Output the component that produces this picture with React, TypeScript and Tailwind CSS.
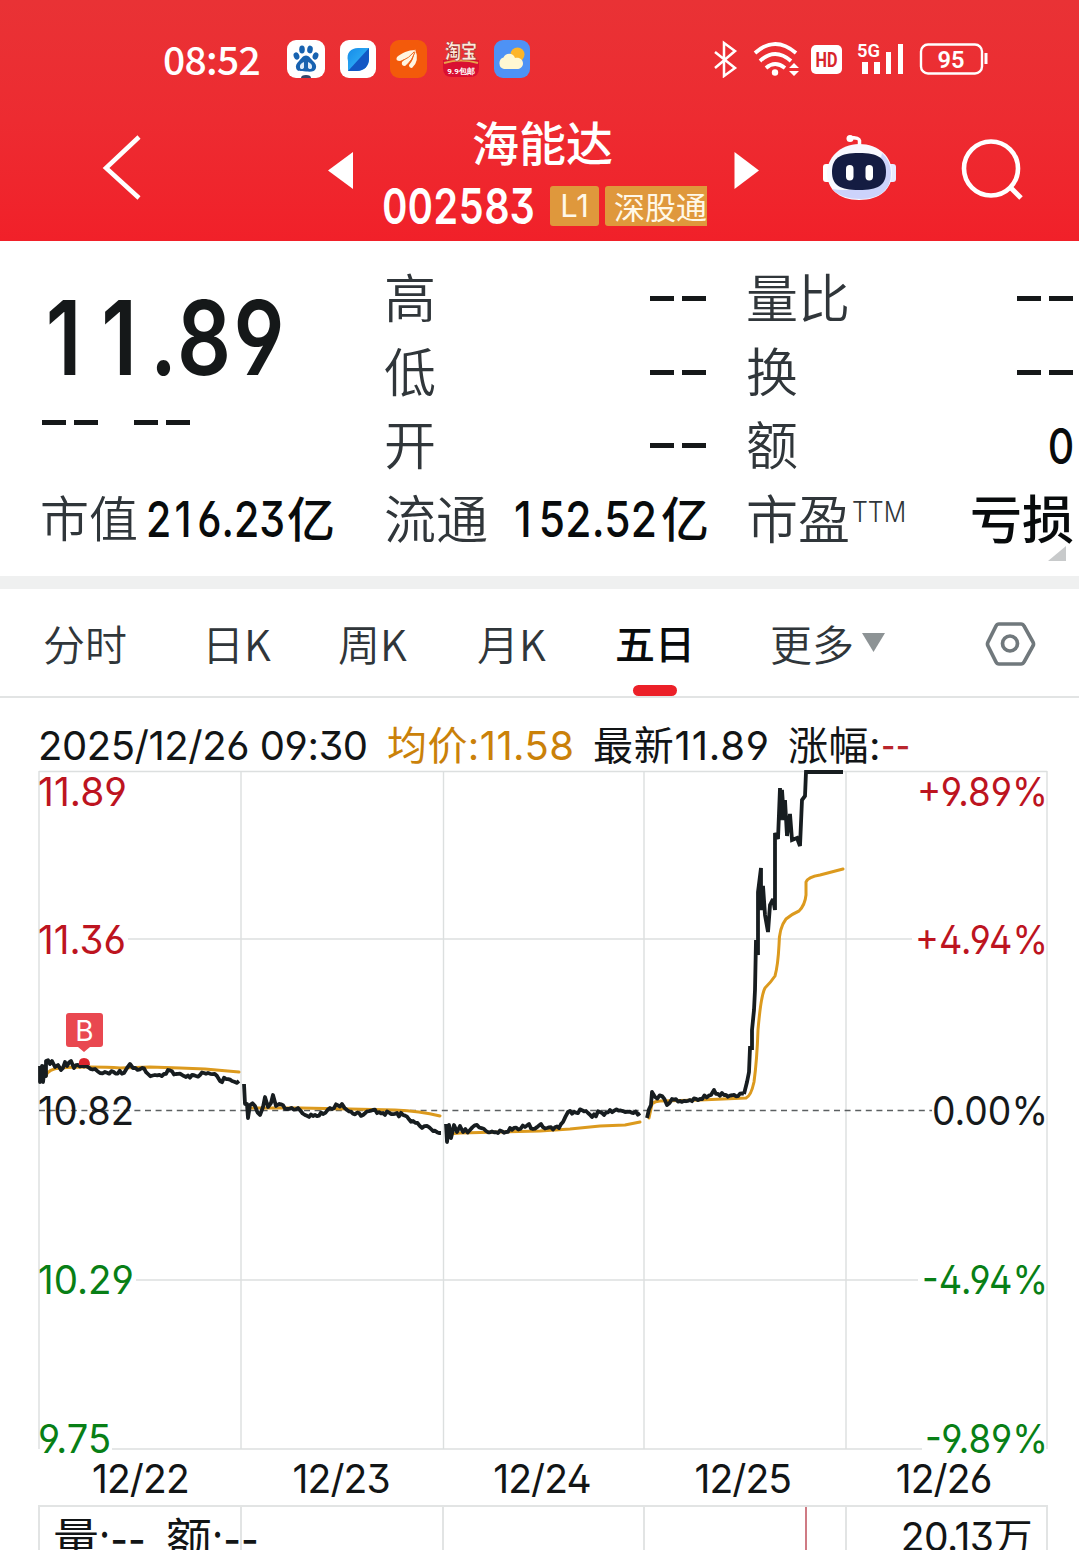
import React from "react";

type Point = [number, number];

/* ---------- Chart data ---------- */

const priceDays: Point[][] = [
  [[40,1066],[40,1082],[42,1066],[43,1082],[45,1066],[46,1076],[46,1061],[50,1064],[52,1061],[55,1067],[58,1065],[61,1070],[65,1062],[67,1066],[71,1061],[74,1068],[78,1065],[82,1066],[88,1067],[95,1069],[100,1073],[105,1072],[124,1073],[127,1068],[130,1064],[133,1068],[142,1068],[148,1074],[155,1075],[164,1074],[168,1070],[176,1074],[186,1077],[192,1075],[200,1075],[208,1073],[217,1076],[220,1081],[226,1079],[232,1081],[239,1081]],
  [[244,1084],[245,1104],[247,1104],[248,1118],[250,1105],[255,1106],[260,1115],[263,1107],[265,1097],[268,1107],[271,1103],[273,1095],[276,1106],[279,1104],[287,1109],[298,1108],[305,1115],[313,1116],[323,1114],[330,1108],[342,1104],[347,1110],[363,1115],[373,1110],[383,1113],[403,1115],[413,1121],[422,1128],[427,1126],[433,1131],[441,1133]],
  [[446,1124],[447,1142],[449,1125],[451,1138],[454,1125],[457,1132],[460,1126],[463,1132],[470,1130],[477,1125],[486,1131],[506,1132],[514,1128],[525,1127],[529,1124],[533,1129],[541,1124],[547,1128],[559,1128],[563,1122],[568,1112],[586,1111],[592,1117],[600,1112],[604,1115],[610,1110],[625,1112],[640,1113]],
  [[647,1118],[651,1105],[652,1092],[655,1097],[662,1096],[667,1105],[672,1099],[680,1101],[690,1100],[700,1099],[711,1095],[714,1090],[718,1094],[724,1095],[744,1094]],
];

const surge: Point[] = [[744,1094],[747,1082],[749,1072],[750,1048],[752,1048],[752,1030],[754,1010],[755,990],[756,940],[758,955],[758,892],[761,868],[761,910],[763,886],[765,915],[768,932],[770,905],[773,899],[775,910],[775,833],[778,839],[780,788],[780,820],[782,790],[784,820],[785,800],[787,836],[790,814],[792,840],[797,838],[800,846],[802,800],[805,796],[806,772],[843,772]];

const averageDays: string[] = [
  "M46 1076 Q48 1069 60 1068 T90 1067 T120 1068 L150 1067 L180 1068 L205 1069 L239 1072",
  "M250 1108 L300 1108 L350 1109 L395 1110 Q420 1111 440 1116",
  "M449 1134 L460 1133 L500 1132 L540 1131 L570 1129 L600 1126 L625 1125 L640 1122",
  "M649 1118 L652 1104 Q655 1101 660 1101 L700 1100 L746 1098 Q751 1096 754 1082 Q757 1060 758 1030 Q761 995 765 988 Q771 982 775 976 Q778 965 779 945 Q779 928 786 919 Q792 914 799 911 Q805 905 806 895 L806 882 Q808 877 820 875 L843 869",
];

function roughen(points: Point[]): string {
  let seed = 7;
  const out: string[] = [];
  points.forEach((p, i) => {
    const next = points[i + 1];
    out.push(`${p[0]},${p[1]}`);
    if (!next) return;
    const steps = Math.floor((next[0] - p[0]) / 2);
    for (let s = 1; s < steps; s++) {
      seed = (seed * 16807) % 2147483647;
      const n = (seed / 2147483647 - 0.5) * 4.5;
      const t = s / steps;
      out.push(`${p[0] + (next[0] - p[0]) * t},${p[1] + (next[1] - p[1]) * t + n}`);
    }
  });
  return out.join(" ");
}

const axisLabels = [
  { y: 806, left: "11.89", lw: 89, right: "+9.89%", rw: 131, fill: "#bd141f" },
  { y: 954, left: "11.36", lw: 88, right: "+4.94%", rw: 133, fill: "#bd141f" },
  { y: 1125, left: "10.82", lw: 96, right: "0.00%", rw: 116, fill: "#16191b" },
  { y: 1294, left: "10.29", lw: 96, right: "-4.94%", rw: 126, fill: "#087f16" },
  { y: 1453, left: "9.75", lw: 73, right: "-9.89%", rw: 123, fill: "#087f16" },
];

const columns = [39, 241, 443.5, 644, 846, 1047];
const gridRows = [
  { y: 939, from: 128, to: 912 },
  { y: 1280, from: 136, to: 918 },
  { y: 1449, from: 112, to: 922 },
];

/* ---------- Status bar icons ---------- */

function BaiduIcon() {
  return (
    <svg viewBox="0 0 38 38" className="size-[38px]">
      <rect width="38" height="38" rx="9" fill="#fff" />
      <g fill="#1762b0">
        <ellipse cx="9.500" cy="16" rx="2.800" ry="3.700" transform="rotate(-20 9.500 16)" />
        <ellipse cx="15" cy="9.500" rx="2.800" ry="3.900" />
        <ellipse cx="23" cy="9.500" rx="2.800" ry="3.900" transform="rotate(8 23 9.500)" />
        <ellipse cx="28.500" cy="16" rx="2.800" ry="3.700" transform="rotate(20 28.500 16)" />
        <path d="M19 15.500c3 0 4.500 3 7 5.500s3.800 4.500 2.800 7.500-4 3.500-9.800 3-8.800 0-9.800-3 .5-5 2.800-7.500 4-5.500 7-5.500z" />
      </g>
      <path d="M17 22c-3 1-4.500 3-4 5.500s4 1.500 4 0zM21 22c3 1 4.500 3 4 5.500s-4 1.500-4 0z" fill="#dcebfa" />
      <path d="M14 38q0-3 5-3t5 3z" fill="#34466a" />
    </svg>
  );
}

function BrowserIcon() {
  return (
    <svg viewBox="0 0 36 38" className="h-[38px] w-9">
      <defs>
        <linearGradient id="leaf" x1="0" y1="0" x2="1" y2="1">
          <stop offset="0" stopColor="#168be8" /><stop offset="1" stopColor="#39bdfb" />
        </linearGradient>
      </defs>
      <rect width="36" height="38" rx="9" fill="#fff" />
      <path d="M8 31V21C6 13 11 8 18 8h11v11c0 7-5 12-12 12z" fill="url(#leaf)" />
      <path d="M29 8v11c0 7-5 12-12 12H8z" fill="#1257c4" />
    </svg>
  );
}

function OrangeIcon() {
  return (
    <svg viewBox="0 0 37 38" className="h-[38px] w-[37px]">
      <rect width="37" height="38" rx="9" fill="#f35a0b" />
      <g fill="#fff5e2">
        <path d="M25 10C18 10 12 13 7 17q-2 4 3 4Q19 18 25 10z" />
        <path d="M25 10Q16 17 12 22q-1 4 3 4Q23 20 25 10z" />
        <path d="M25 9q-1 11-6 16 0 3 3 3 8-7 3-19z" />
      </g>
      <path d="M24 12q-5 6-12 9M25 12q-3 9-8 13" stroke="#ef6a20" strokeWidth="1" fill="none" />
    </svg>
  );
}

function TaobaoIcon() {
  return (
    <svg viewBox="0 0 38 38" className="size-[38px]">
      <path d="M1 20h36v8q0 9-9 9H10q-9 0-9-9z" fill="#d90f32" />
      <path d="M2 23q17-5 34 0" stroke="#e8a24b" strokeWidth="2" fill="none" />
      <text x="19" y="19" textAnchor="middle" fontSize="20" fontWeight="900" fill="#ffeadb" stroke="#8f1717" strokeWidth=".5" fontFamily="Noto Sans CJK SC" textLength="32" lengthAdjust="spacingAndGlyphs">淘宝</text>
      <text x="19" y="34" textAnchor="middle" fontSize="8" fontWeight="700" fill="#fff" fontFamily="Roboto">9.9包邮</text>
    </svg>
  );
}

function WeatherIcon() {
  return (
    <svg viewBox="0 0 36 38" className="h-[38px] w-9">
      <rect width="36" height="38" rx="9" fill="#4e92f5" />
      <circle cx="23.500" cy="14.500" r="7" fill="#fdb528" />
      <path d="M10 29a6 6 0 0 1-.5-11.500C11 13 19 12 21 18c5-1 8 2 8 5.500S26 29 23 29z" fill="#fff7d2" />
    </svg>
  );
}

function StatusBar() {
  return (
    <div className="flex h-[90px] items-end pb-3 pl-[163px] text-white">
      <span className="w-[124px] pb-0.5 font-['Noto_Sans_CJK_SC'] text-[39px] leading-[36px] font-medium tracking-[-0.700px]">08:52</span>
      <div className="flex w-[425px] items-center gap-[14.500px]">
        <BaiduIcon />
        <BrowserIcon />
        <OrangeIcon />
        <TaobaoIcon />
        <WeatherIcon />
      </div>
      <svg viewBox="712 40 280 38" className="h-[38px] w-[280px] shrink-0" fill="none" stroke="#fff">
        <path d="m715 52 20 16-11 8V43l11 8-20 17" strokeWidth="2.500" />
        <g strokeWidth="3.800">
          <path d="M755 53q20-18 41 0" />
          <path d="M760 61q15-14 31 0" />
          <path d="M766 68q9-8 19 0" />
        </g>
        <circle cx="775" cy="72.500" r="3.200" fill="#fff" stroke="none" />
        <path d="m789 68 5-5 5 5zm0 3h10l-5 5z" fill="#fff" stroke="none" />
        <rect x="811" y="45" width="31" height="29" rx="5" fill="#fff" stroke="none" />
        <text x="826.500" y="67" textAnchor="middle" fontSize="21" fontWeight="700" fill="#d8252b" stroke="none" fontFamily="Roboto" textLength="22" lengthAdjust="spacingAndGlyphs">HD</text>
        <text x="857" y="57" fontSize="19" fontWeight="600" fill="#fff" stroke="none" fontFamily="Roboto" textLength="23" lengthAdjust="spacingAndGlyphs">5G</text>
        <path d="M862 62h6v12h-6zM874 62h6v12h-6zM886 52h5v22h-5zM898 44h5v30h-5z" fill="#fff" stroke="none" />
        <rect x="921" y="44.500" width="61" height="29" rx="7" strokeWidth="2.400" />
        <path d="M986 53v11" strokeWidth="3" />
        <text x="951" y="67.500" textAnchor="middle" fontSize="23" fontWeight="600" fill="#fff" stroke="none" fontFamily="Roboto" textLength="27" lengthAdjust="spacingAndGlyphs">95</text>
      </svg>
    </div>
  );
}

function RobotIcon() {
  return (
    <svg viewBox="823 133 73 68" className="h-[68px] w-[73px]">
      <path d="M849 137.500q10 0 10.500 3v6" fill="none" stroke="#fff" strokeWidth="3.500" />
      <circle cx="850" cy="138.500" r="3.500" fill="#fff" />
      <rect x="823" y="164" width="9" height="18" rx="3" fill="#fff" />
      <rect x="887" y="164" width="9" height="18" rx="3" fill="#e7eaff" />
      <path d="M859 144c20 0 33 13 33 29s-12 27-33 27-32-12-32-27 13-29 32-29z" fill="#f8f9ff" />
      <path d="M882 153q9 8 9 20 0 25-30 26-20 0-29-10 44 7 50-36z" fill="#ccd3fb" />
      <path d="M859 153c19 0 27 5 27 19 0 13-8 18-27 18s-27-5-27-18c0-14 8-19 27-19z" fill="#141c42" />
      <rect x="846" y="165" width="7.500" height="15.500" rx="3.700" fill="#fff" />
      <rect x="865.500" y="165" width="7.500" height="15.500" rx="3.700" fill="#fff" />
    </svg>
  );
}

const digits = "font-['Inter','Noto_Sans_CJK_SC'] [font-feature-settings:'ss01','cv09']";
const cjk = "font-['Noto_Sans_CJK_SC']";

function TitleBar() {
  return (
    <div className="flex h-[151px] items-start text-white">
      <svg viewBox="0 90 370 151" className="h-[151px] w-[370px] shrink-0">
        <path d="m139 137-33 31 33 30" fill="none" stroke="#fff" strokeWidth="4.500" />
        <path d="M328 170.500 353 152v37z" fill="#fff" />
      </svg>
      <div className="w-[345px] shrink-0">
        <h1 className={`${cjk} mt-[23px] h-[73px] text-center text-[47px] leading-[56px] font-medium`}>海能达</h1>
        <div className="flex h-10 items-center pl-3">
          <span className={`${digits} w-[168px] origin-left scale-x-[0.79] text-[50px] leading-10 font-semibold tabular-nums`}>002583</span>
          <span className={`${digits} h-10 w-[49px] shrink-0 rounded-[3px] bg-[#df983c] text-center text-[31px] leading-10 text-[#fff8e8]`}>L1</span>
          <span className={`${cjk} ml-1.5 h-10 w-[102px] shrink-0 overflow-hidden rounded-l-[3px] bg-[#df983c] pl-[9px] text-[31px] leading-[40px] whitespace-nowrap text-[#fff8e8]`}>深股通</span>
        </div>
      </div>
      <svg viewBox="715 90 108 151" className="h-[151px] w-[108px] shrink-0">
        <path d="M759 170.500 734.500 152v37z" fill="#fff" />
      </svg>
      <div className="mt-[43px] shrink-0"><RobotIcon /></div>
      <svg viewBox="955 130 74 74" className="mt-10 ml-[59px] size-[74px] shrink-0">
        <circle cx="991" cy="168.500" r="27" fill="none" stroke="#fff" strokeWidth="4.600" />
        <path d="m1010 187 11 11" stroke="#fff" strokeWidth="5" />
      </svg>
    </div>
  );
}

/* ---------- Quote summary ---------- */

function Dashes() {
  return (
    <span className="flex gap-2">
      <i className="h-[5px] w-6 bg-[#151819]" />
      <i className="h-[5px] w-6 bg-[#151819]" />
    </span>
  );
}

function Row({ label, children }: { label: React.ReactNode; children: React.ReactNode }) {
  return (
    <div className="flex h-[73.500px] items-center justify-between">
      <span className={`${cjk} -mt-[5px] -ml-px text-[52px] leading-[74px] font-[350] whitespace-nowrap text-[#30363a]`}>{label}</span>
      {children}
    </div>
  );
}

const amount = `${digits} origin-left text-[50px] leading-[74px] font-[550] whitespace-nowrap text-[#080b0c]`;
const unit = `${cjk} -mt-[7px] text-[48px] leading-[74px] font-medium text-[#080b0c]`;

function Summary() {
  return (
    <section className="flex h-[335px] bg-white pt-[21px]">
      <div className="w-[385px] shrink-0 pl-10">
        <div className={`${digits} h-[137px] w-[250px] origin-left scale-x-[0.82] pt-[22px] pl-[7px] text-[103px] leading-[108px] font-[580] whitespace-nowrap text-[#151819]`}>
          <span className="mr-6">1</span><span className="mr-4">1</span>.<span className="tracking-[3px]">89</span>
        </div>
        <div className="flex h-[83.500px] gap-9 pt-[21px] pl-0.5"><Dashes /><Dashes /></div>
        <div className="flex h-[73.500px] items-center">
          <span className={`${cjk} -mt-[7px] w-[106px] text-[49px] leading-[74px] font-[350] whitespace-nowrap text-[#30363a]`}>市值</span>
          <span className={`${amount} w-[141px] scale-x-[0.82]`}>2<span className="mr-[7px] ml-1">1</span>6.23</span>
          <span className={unit}>亿</span>
        </div>
      </div>
      <div className="w-[324px] shrink-0">
        <Row label="高"><div className="pr-[3px]"><Dashes /></div></Row>
        <Row label="低"><div className="pr-[3px]"><Dashes /></div></Row>
        <Row label="开"><div className="pr-[3px]"><Dashes /></div></Row>
        <Row label="流通">
          <span className="flex items-center">
            <span className={`${amount} w-[147px] scale-x-[0.85] tracking-[0.300px]`}><span className="mr-2">1</span>52.52</span>
            <span className={unit}>亿</span>
          </span>
        </Row>
      </div>
      <div className="ml-[38px] w-[327px] shrink-0">
        <Row label="量比"><div className="pr-px"><Dashes /></div></Row>
        <Row label="换"><div className="pr-px"><Dashes /></div></Row>
        <Row label="额"><span className={`${digits} origin-right scale-x-[0.82] text-[50px] leading-[74px] font-[550] text-[#080b0c]`}>0</span></Row>
        <div className="relative">
          <Row label={<span className="flex">市盈<span className={`${digits} -mt-[5px] ml-0.5 origin-left scale-x-[0.86] text-[29px] font-light`}>TTM</span></span>}>
            <span className={`${cjk} -mt-1 -ml-10 text-[52px] leading-[74px] font-medium whitespace-nowrap text-[#080b0c]`}>亏损</span>
          </Row>
          <svg viewBox="0 0 18 15" className="absolute right-2 -bottom-[5px] h-[15px] w-[18px]"><path d="M0 15 18 0v15z" fill="#c8cacb" /></svg>
        </div>
      </div>
    </section>
  );
}

/* ---------- Tabs ---------- */

function Tabs() {
  return (
    <nav className={`${cjk} flex h-[109px] border-b-2 border-[#e2e4e4] bg-white pl-[43px] text-[42px] leading-[107px] font-[350] whitespace-nowrap text-[#30363a]`}>
      <span className="w-[159px]">分时</span>
      <span className="w-[136px]">日K</span>
      <span className="w-[139px]">周K</span>
      <span className="w-[138px]">月K</span>
      <span className="flex w-[155px] flex-col font-medium text-[#080b0c]">
        <span className="h-24 text-[40px]">五日</span>
        <i className="ml-[18px] h-[11px] w-11 shrink-0 rounded-full bg-[#ec2028]" />
      </span>
      <span className="w-[92px]">更多</span>
      <svg viewBox="862 589 217 107" className="h-[107px] w-[217px] shrink-0" fill="none" stroke="#70787c" strokeWidth="3.700">
        <path d="M862 633h23l-11.500 19z" fill="#8d9395" stroke="none" />
        <path d="M999 624h22q2 0 3 2l9 16q1 2 0 4l-9 16q-1 2-3 2h-22q-2 0-3-2l-8-16q-1-2 0-4l8-16q1-2 3-2z" />
        <circle cx="1010" cy="643.500" r="7.500" />
      </svg>
    </nav>
  );
}

/* ---------- Chart ---------- */

function Legend() {
  return (
    <div className={`${digits} flex h-[73px] items-end pl-[38px] text-[40px] leading-[50px] whitespace-nowrap text-[#121516]`}>
      <span className="w-[349px] tracking-[-0.450px]">2025/12/26 09:30</span>
      <span className="w-[206px] tracking-[0.400px] text-[#ca8109]">均价:11.58</span>
      <span className="w-[195px] tracking-[0.800px]">最新11.89</span>
      <span className="tracking-[0.500px]">涨幅:<span className="inline-block origin-left scale-x-[0.78] text-[#b9262d]">--</span></span>
    </div>
  );
}

function PriceChart() {
  return (
    <svg viewBox="0 771 1079 679" className="block h-[679px] w-full overflow-visible">
      <g stroke="#dcdfdf" strokeWidth="1.400">
        <path d="M39 771.500H1047" />
        {columns.map((x) => <path key={x} d={`M${x} 771V1449`} />)}
        {gridRows.map((r) => <path key={r.y} d={`M${r.from} ${r.y}H${r.to}`} />)}
      </g>
      <path d="M39 1110.500H932" stroke="#5b5f61" strokeWidth="1.400" strokeDasharray="6 4.600" />
      <g fill="none" stroke="#dc9a1e" strokeWidth="3" strokeLinejoin="round" strokeLinecap="round">
        {averageDays.map((d) => <path key={d} d={d} />)}
      </g>
      <g fill="none" stroke="#171d20" strokeWidth="3.800" strokeLinejoin="round">
        {priceDays.map((day, i) => <polyline key={i} points={roughen(day)} />)}
        <polyline points={surge.map((p) => p.join(",")).join(" ")} strokeLinejoin="miter" strokeMiterlimit="2" />
      </g>
      <path d="M79 1065q-1-7 5-7t6 7z" fill="#dc252d" />
      <path d="M69 1013h31q3 0 3 3v28q0 3-3 3h-10l-6 5-6-5h-9q-3 0-3-3v-28q0-3 3-3z" fill="#e94850" />
      <text x="84.500" y="1040.500" textAnchor="middle" fontSize="28" fill="#fff" fontFamily="Inter">B</text>
      <g fontSize="39" className="font-['Inter'] [font-feature-settings:'ss01','cv09']">
        {axisLabels.map((a) => (
          <g key={a.y} fill={a.fill}>
            <text x="38" y={a.y} textLength={a.lw} lengthAdjust="spacingAndGlyphs">{a.left}</text>
            <text x={1048 - a.rw} y={a.y} textLength={a.rw} lengthAdjust="spacingAndGlyphs">{a.right}</text>
          </g>
        ))}
      </g>
    </svg>
  );
}

function VolumePanel() {
  return (
    <div className={`${digits} ml-[38px] flex h-[45px] w-[1010px] overflow-hidden border-x-2 border-t-2 border-[#e2e4e4] text-[39px] leading-[60px] whitespace-nowrap text-[#121516]`}>
      <div className="w-[202px] border-r-2 border-[#e2e4e4] pt-0.5 pl-[13px]">
        <span className="inline-flex w-[113px] text-[46px]">量<span className="origin-left scale-x-[0.84]">:--</span></span>
        <span className="inline-flex w-10 text-[46px]">额<span className="origin-left scale-x-[0.84]">:--</span></span>
      </div>
      <div className="w-[202px] border-r-2 border-[#e2e4e4]" />
      <div className="w-[201px] border-r-2 border-[#e2e4e4]" />
      <div className="flex w-[202px] justify-end border-r-2 border-[#e2e4e4] pr-[38px]"><i className="w-0.5 bg-[#cf7b84]" /></div>
      <div className="flex-1 pr-[14px] text-right tracking-[-0.500px]">20.13万</div>
    </div>
  );
}

export default function App() {
  return (
    <main className="h-[1550px] w-[1079px] overflow-hidden bg-white">
      <header className="h-[241px] bg-linear-to-b from-[#e93235] via-[#ed2b31] to-[#f12029]">
        <StatusBar />
        <TitleBar />
      </header>
      <Summary />
      <div className="h-[13px] bg-[#eff0f0]" />
      <Tabs />
      <Legend />
      <PriceChart />
      <div className={`${digits} ml-[40px] grid h-[55px] w-[1004px] grid-cols-5 text-center text-[39px] leading-[58px] tracking-[-0.900px] text-[#121516]`}>
        <span>12/22</span>
        <span>12/23</span>
        <span>12/24</span>
        <span>12/25</span>
        <span>12/26</span>
      </div>
      <VolumePanel />
    </main>
  );
}
